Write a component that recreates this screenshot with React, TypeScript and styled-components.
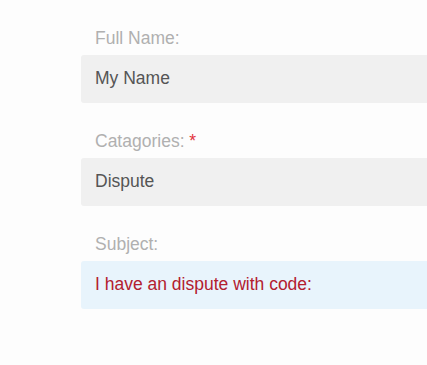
import React from "react";
import styled, { createGlobalStyle } from "styled-components";

const GlobalStyle = createGlobalStyle`
  html, body {
    margin: 0;
    padding: 0;
    background: #fdfdfd;
  }
`;

type Tone = "plain" | "info";

const App: React.FC = () => {
  return (
    <>
      <GlobalStyle />
      <Page>
        <Form>
          <Field>
            <Label>Full Name:</Label>
            <Input tone="plain">My Name</Input>
          </Field>
          <Field>
            <Label>
              Catagories: <Required>*</Required>
            </Label>
            <Input tone="plain">Dispute</Input>
          </Field>
          <Field>
            <Label>Subject:</Label>
            <Input tone="info">I have an dispute with code:</Input>
          </Field>
        </Form>
      </Page>
    </>
  );
};

const Page = styled.div`
  box-sizing: border-box;
  height: 100vh;
  overflow: hidden;
  padding: 28px 0 0 81px;
  font-family: "Liberation Sans", Arial, sans-serif;
  font-size: 17.5px;
`;

const Form = styled.form`
  display: flex;
  flex-direction: column;
  gap: 28px;
`;

const Field = styled.div`
  display: flex;
  flex-direction: column;
  gap: 7px;
`;

const Label = styled.label`
  display: block;
  padding-left: 14px;
  line-height: 20px;
  color: #b0b0b0;
`;

const Required = styled.span`
  color: #e2323c;
`;

const Input = styled.div<{ tone: Tone }>`
  display: flex;
  align-items: center;
  height: 48px;
  padding: 0 14px 2px;
  box-sizing: border-box;
  border-radius: 3px 0 0 3px;
  background: ${(p) => (p.tone === "info" ? "#e8f4fc" : "#f0f0f0")};
  color: ${(p) => (p.tone === "info" ? "#b3202f" : "#555555")};
  white-space: nowrap;
`;

export default App;
